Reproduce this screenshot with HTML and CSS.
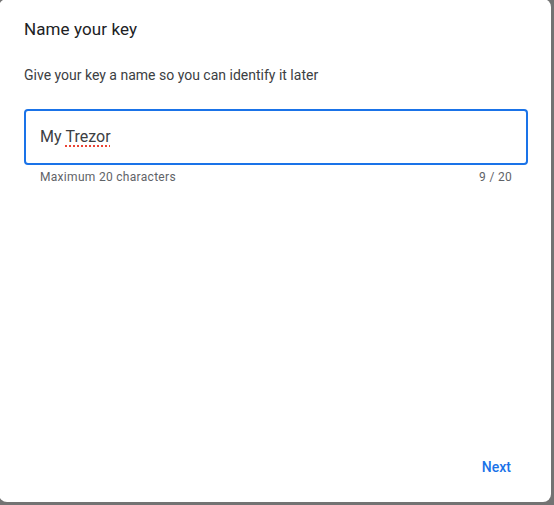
FILE: index.html
```html
<!DOCTYPE html>
<html lang="en">
<head>
<meta charset="utf-8">
<title>Name your key</title>
<link rel="stylesheet" href="styles.css">
</head>
<body>
<div class="dialog">
  <h1 class="title">Name your key</h1>
  <p class="desc">Give your key a name so you can identify it later</p>
  <div class="field">
    <div class="input">My <span class="misspelled">Trezor</span></div>
    <div class="helper">
      <span>Maximum 20 characters</span>
      <span>9 / 20</span>
    </div>
  </div>
  <div class="spacer"></div>
  <div class="footer">
    <button class="btn-next">Next</button>
  </div>
</div>
</body>
</html>
```
FILE: styles.css
```css
html, body {
  margin: 0;
  padding: 0;
  height: 100%;
  overflow: hidden;
}
body {
  background: #737373;
  font-family: Roboto, "Liberation Sans", Arial, sans-serif;
}
.dialog {
  box-sizing: border-box;
  margin: -1px 0 0 -1px;
  width: 552px;
  height: 503px;
  padding: 18px 23px 17px 25px;
  background: #fff;
  border-radius: 8px;
  display: flex;
  flex-direction: column;
}
.title {
  margin: 0;
  font-size: 17px;
  line-height: 24px;
  font-weight: 400;
  letter-spacing: 0.1px;
  color: #202124;
}
.desc {
  margin: 24px 0 0;
  font-size: 14px;
  line-height: 20px;
  color: #3c4043;
}
.field {
  margin-top: 24px;
}
.input {
  box-sizing: border-box;
  height: 56px;
  border: 2px solid #1a73e8;
  border-radius: 4px;
  padding: 0 14px;
  display: flex;
  align-items: center;
  font-size: 16px;
  line-height: 24px;
  color: #3c4043;
  white-space: pre;
}
.misspelled {
  text-decoration: underline dotted #ea4335;
  text-decoration-thickness: 2px;
  text-underline-offset: 3px;
}
.helper {
  margin-top: 4px;
  padding: 0 16px;
  display: flex;
  justify-content: space-between;
  font-size: 12px;
  line-height: 16px;
  color: #5f6368;
  letter-spacing: 0.3px;
}
.spacer {
  flex: 1;
}
.footer {
  display: flex;
  justify-content: flex-end;
  padding-right: 1px;
}
.btn-next {
  height: 36px;
  padding: 0 16px;
  border: none;
  background: transparent;
  font-family: inherit;
  font-size: 14px;
  font-weight: 500;
  line-height: 20px;
  color: #1a73e8;
  cursor: pointer;
}
```
